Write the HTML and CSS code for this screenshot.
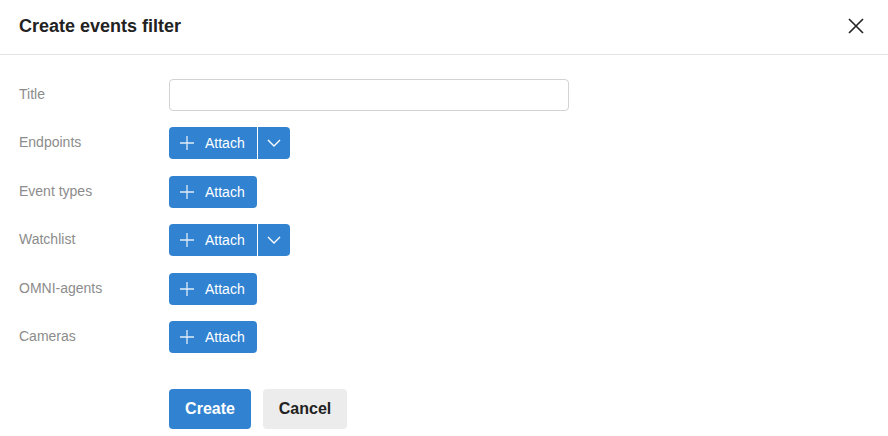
FILE: index.html
```html
<!DOCTYPE html>
<html>
<head>
<meta charset="utf-8">
<link rel="stylesheet" href="styles.css">
</head>
<body>
<div class="dialog">
  <header class="header">
    <h1 class="title">Create events filter</h1>
    <button class="close" aria-label="Close">
      <svg width="16" height="16" viewBox="0 0 16 16"><path d="M1 1L15 15M15 1L1 15" stroke="#222" stroke-width="1.6" fill="none"/></svg>
    </button>
  </header>
  <div class="body">
    <div class="row">
      <label class="label">Title</label>
      <input class="input" type="text">
    </div>
    <div class="row">
      <label class="label">Endpoints</label>
      <div class="split">
        <button class="attach joined"><svg class="plus" width="14" height="14" viewBox="0 0 14 14"><path d="M7 0V14M0 7H14" stroke="#fff" stroke-width="1.3" opacity="0.85"/></svg>Attach</button>
        <button class="caret"><svg width="14" height="8" viewBox="0 0 14 8"><path d="M1 1L7 7L13 1" stroke="#fff" stroke-width="1.4" fill="none"/></svg></button>
      </div>
    </div>
    <div class="row">
      <label class="label">Event types</label>
      <button class="attach"><svg class="plus" width="14" height="14" viewBox="0 0 14 14"><path d="M7 0V14M0 7H14" stroke="#fff" stroke-width="1.3" opacity="0.85"/></svg>Attach</button>
    </div>
    <div class="row">
      <label class="label">Watchlist</label>
      <div class="split">
        <button class="attach joined"><svg class="plus" width="14" height="14" viewBox="0 0 14 14"><path d="M7 0V14M0 7H14" stroke="#fff" stroke-width="1.3" opacity="0.85"/></svg>Attach</button>
        <button class="caret"><svg width="14" height="8" viewBox="0 0 14 8"><path d="M1 1L7 7L13 1" stroke="#fff" stroke-width="1.4" fill="none"/></svg></button>
      </div>
    </div>
    <div class="row">
      <label class="label">OMNI-agents</label>
      <button class="attach"><svg class="plus" width="14" height="14" viewBox="0 0 14 14"><path d="M7 0V14M0 7H14" stroke="#fff" stroke-width="1.3" opacity="0.85"/></svg>Attach</button>
    </div>
    <div class="row">
      <label class="label">Cameras</label>
      <button class="attach"><svg class="plus" width="14" height="14" viewBox="0 0 14 14"><path d="M7 0V14M0 7H14" stroke="#fff" stroke-width="1.3" opacity="0.85"/></svg>Attach</button>
    </div>
    <div class="actions">
      <button class="btn primary">Create</button>
      <button class="btn secondary">Cancel</button>
    </div>
  </div>
</div>
</body>
</html>
```

FILE: styles.css
```css
* { box-sizing: border-box; }
html, body { margin: 0; padding: 0; background: #fff; }
body { font-family: "Liberation Sans", Arial, sans-serif; color: #222; }
.dialog { width: 888px; height: 436px; overflow: hidden; }
.header {
  height: 55px;
  border-bottom: 1px solid #e3e3e3;
  display: flex;
  align-items: center;
  justify-content: space-between;
  padding: 0 24px 2px 19px;
}
.title { margin: 0; font-size: 18px; font-weight: bold; color: #222; }
.close { background: none; border: 0; padding: 0; width: 16px; height: 16px; display: flex; cursor: pointer; }
.body { padding: 24px 0 0 19px; }
.row { display: flex; align-items: center; height: 32px; margin-bottom: 16px; }
.row:nth-child(even) { margin-bottom: 17px; }
.label { width: 150px; font-size: 14px; color: #8c8c8c; padding-bottom: 3px; }
.input {
  width: 400px; height: 32px;
  border: 1px solid #d3d3d3; border-radius: 4px;
  font: inherit; font-size: 14px; padding: 0 10px; outline: none;
}
.split { display: flex; }
.attach {
  display: flex; align-items: center;
  height: 32px; width: 88px;
  padding: 0 0 0 11px;
  background: #3183d1; color: #fff;
  border: 0; border-radius: 4px;
  font-family: inherit; font-size: 14px;
  cursor: pointer;
}
.attach.joined { border-radius: 4px 0 0 4px; }
.plus { margin-right: 11px; }
.caret {
  display: flex; align-items: center; justify-content: center;
  width: 33px; height: 32px; padding: 0;
  background: #3183d1; border: 0;
  border-left: 1px solid #fff;
  border-radius: 0 4px 4px 0;
  cursor: pointer;
}
.actions { display: flex; gap: 12px; padding-left: 150px; margin-top: 36px; }
.btn {
  height: 40px; border: 0; border-radius: 4px;
  font-family: inherit; font-size: 16px; font-weight: bold;
  cursor: pointer;
}
.primary { width: 82px; background: #3183d1; color: #fff; }
.secondary { width: 84px; background: #ececec; color: #222; }
```
